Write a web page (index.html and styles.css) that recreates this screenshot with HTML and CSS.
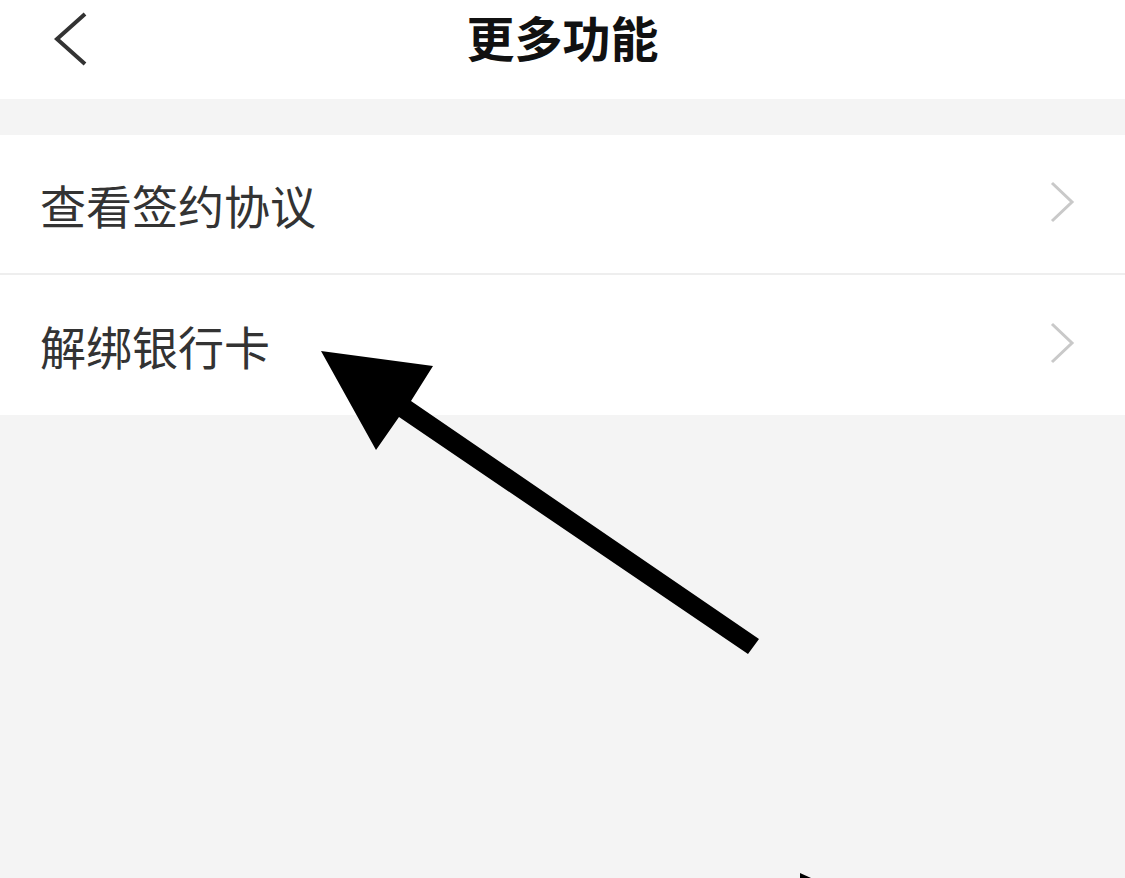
FILE: index.html
```html
<!DOCTYPE html>
<html lang="zh-CN">
<head>
<meta charset="utf-8">
<title>更多功能</title>
<link rel="stylesheet" href="styles.css">
</head>
<body>
<div class="page">
  <header class="topbar">
    <svg class="back" width="40" height="60" viewBox="0 0 40 60">
      <polyline points="31,13 3,38 31,63" transform="translate(0,-8)" fill="none" stroke="#333" stroke-width="4" stroke-linejoin="miter"/>
    </svg>
    <h1 class="title">更多功能</h1>
  </header>
  <div class="gap"></div>
  <ul class="list">
    <li class="item">
      <span class="label">查看签约协议</span>
      <svg class="chev" width="26" height="42" viewBox="0 0 26 42"><polyline points="3,2 23,21 3,40" fill="none" stroke="#c9c9c9" stroke-width="3"/></svg>
    </li>
    <li class="item">
      <span class="label">解绑银行卡</span>
      <svg class="chev" width="26" height="42" viewBox="0 0 26 42"><polyline points="3,2 23,21 3,40" fill="none" stroke="#c9c9c9" stroke-width="3"/></svg>
    </li>
  </ul>
  <svg class="annot" width="1125" height="878" viewBox="0 0 1125 878">
    <polygon points="321,351 433,366 411,401 759,639 748,654 399,417 376,450" fill="#000"/>
    <polygon points="800,873 811,878 800,878" fill="#000"/>
  </svg>
</div>
</body>
</html>
```

FILE: styles.css
```css
html, body {
  margin: 0;
  padding: 0;
  background: #f4f4f4;
}
body {
  font-family: "Noto Sans CJK SC", "Noto Sans", sans-serif;
  width: 1125px;
  height: 878px;
  overflow: hidden;
}
.page {
  position: relative;
  width: 1125px;
  height: 878px;
}
.topbar {
  position: relative;
  height: 99px;
  background: #fff;
  display: flex;
  align-items: center;
  justify-content: center;
}
.back {
  position: absolute;
  left: 54px;
  top: 9px;
}
.title {
  margin: 0;
  font-size: 48px;
  font-weight: 700;
  color: #111;
  line-height: 1;
  letter-spacing: 0;
  transform: translateY(-14px);
}
.gap {
  height: 36px;
}
.list {
  list-style: none;
  margin: 0;
  padding: 0;
  background: #fff;
}
.item {
  height: 138px;
  display: flex;
  align-items: center;
  justify-content: space-between;
  padding: 0 50px 0 40px;
  box-sizing: border-box;
}
.item + .item {
  border-top: 2px solid #eeeeee;
  height: 142px;
}
.label {
  font-size: 46px;
  color: #333;
  line-height: 1;
  margin-top: 0;
}
.chev {
  display: block;
  margin-top: -4px;
}
.annot {
  position: absolute;
  left: 0;
  top: 0;
  pointer-events: none;
}
```
